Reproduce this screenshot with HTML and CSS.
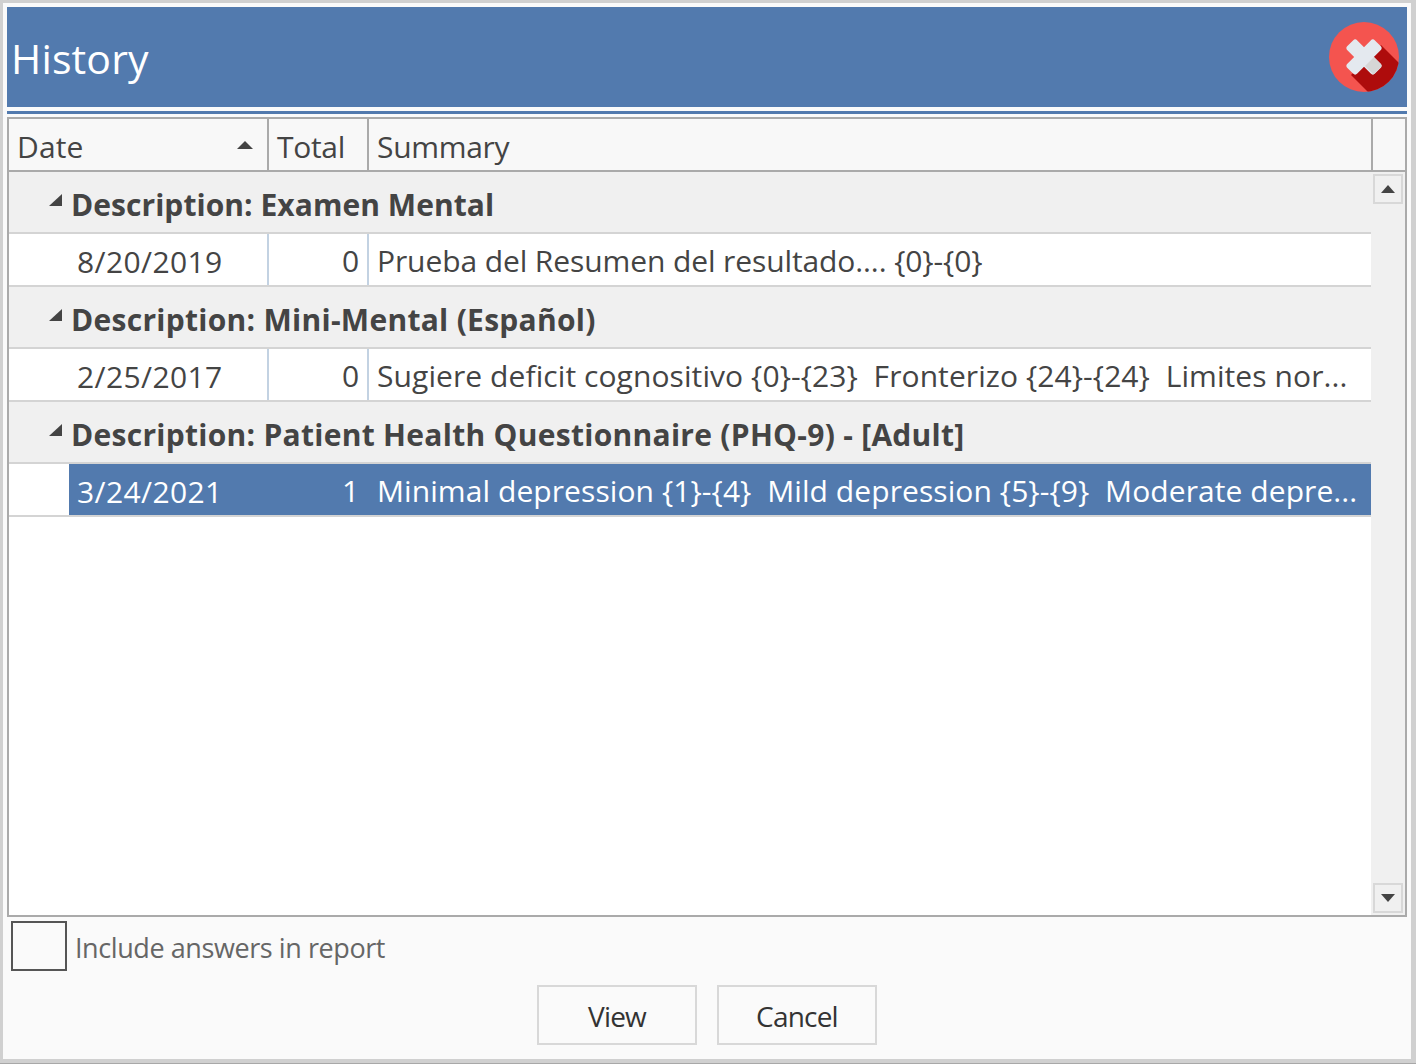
FILE: index.html
```html
<!DOCTYPE HTML>
<html lang="en">
  <head>
    <title>History</title>
    <meta charset="utf-8">
    <link rel="stylesheet" href="styles.css">
  </head>
  <body>
  <div class="dialog">
    <div class="titlebar">
      <span class="title">History</span>
      <svg class="close" width="70" height="70" viewBox="0 0 70 70">
        <defs><clipPath id="disc"><circle cx="35" cy="35" r="35"/></clipPath></defs>
        <circle cx="35" cy="35" r="35" fill="#f4544f"/>
        <polygon clip-path="url(#disc)" points="52,23 75,46 75,75 44,75 22,53" fill="#ae0c0c"/>
        <rect x="15.5" y="28" width="39" height="14" rx="3" fill="#e4e9ef" transform="rotate(45 35 35)"/>
        <rect x="15.5" y="28" width="39" height="14" rx="3" fill="#e4e9ef" transform="rotate(-45 35 35)"/>
        <path d="M36 44 L45 35 L52 42 Q53 44 52 45 L45 52 Q44 53 43 51 Z" fill="#d6d6d6"/>
      </svg>
    </div>
    <div class="rule"></div>

    <div class="grid">
      <div class="grid-main">
        <div class="head row-cols">
          <div class="hcell date-h"><span>Date</span><svg width="16" height="8" viewBox="0 0 16 8"><polygon points="8,0 16,8 0,8" fill="#444"/></svg></div>
          <div class="hcell total-h">Total</div>
          <div class="hcell summary-h">Summary</div>
          <div class="hcell corner"></div>
        </div>
        <div class="body-wrap">
          <div class="rows">
            <div class="group"><svg class="tri" width="13" height="12" viewBox="0 0 13 12"><polygon points="13,0 13,12 0,12" fill="#444"/></svg><span class="group-text group-short">Description: Examen Mental</span></div>
            <div class="data row-cols">
              <div class="cell date">8/20/2019</div>
              <div class="cell total">0</div>
              <div class="cell summary">Prueba del Resumen del resultado.... {0}-{0}</div>
            </div>
            <div class="group"><svg class="tri" width="13" height="12" viewBox="0 0 13 12"><polygon points="13,0 13,12 0,12" fill="#444"/></svg><span class="group-text">Description: Mini-Mental (Español)</span></div>
            <div class="data row-cols">
              <div class="cell date">2/25/2017</div>
              <div class="cell total">0</div>
              <div class="cell summary summary-long">Sugiere deficit cognositivo {0}-{23}&nbsp; Fronterizo {24}-{24}&nbsp; Limites nor...</div>
            </div>
            <div class="group"><svg class="tri" width="13" height="12" viewBox="0 0 13 12"><polygon points="13,0 13,12 0,12" fill="#444"/></svg><span class="group-text">Description: Patient Health Questionnaire (PHQ-9) - [Adult]</span></div>
            <div class="data row-cols selected">
              <div class="cell date">3/24/2021</div>
              <div class="cell total">1</div>
              <div class="cell summary summary-long">Minimal depression {1}-{4}&nbsp; Mild depression {5}-{9}&nbsp; Moderate depre...</div>
            </div>
          </div>
          <div class="scrollbar">
            <div class="sbtn"><svg width="14" height="8" viewBox="0 0 14 8"><polygon points="7,0 14,8 0,8" fill="#444"/></svg></div>
            <div class="sbtn"><svg width="14" height="8" viewBox="0 0 14 8"><polygon points="0,0 14,0 7,8" fill="#444"/></svg></div>
          </div>
        </div>
      </div>
    </div>

    <div class="include">
      <div class="check"></div>
      <span>Include answers in report</span>
    </div>
    <div class="buttons">
      <div class="btn">View</div>
      <div class="btn">Cancel</div>
    </div>
  </div>
  </body>
</html>
```
FILE: styles.css
```css
html, body {
  margin: 0;
  padding: 0;
  height: 100%;
}
body {
  font-family: "Open Sans", "Noto Sans", sans-serif;
  color: #444;
  background: #a8a8a8;
}
.dialog {
  box-sizing: border-box;
  width: 1416px;
  height: 1063px;
  background: #fafafa;
  border-style: solid;
  border-color: #d0d0d0;
  border-width: 3px 5px 4px 3px;
  padding: 4px 4px 0 4px;
  display: flex;
  flex-direction: column;
}
.titlebar {
  height: 100px;
  background: #527aae;
  display: flex;
  align-items: center;
  justify-content: space-between;
  padding: 0 8px 0 4px;
  flex: none;
}
.title {
  color: #fff;
  font-size: 41px;
  letter-spacing: 0.15px;
  margin-top: 2px;
}
.close {
  display: block;
}
.rule {
  height: 3px;
  margin-top: 4px;
  background: #527aae;
  flex: none;
}
.grid {
  box-sizing: border-box;
  margin-top: 3px;
  height: 800px;
  border: 2px solid #aaa;
  background: #fff;
  flex: none;
}
.grid-main {
  height: 100%;
  display: flex;
  flex-direction: column;
}
.row-cols {
  display: grid;
  grid-template-columns: 260px 100px 1002px;
}
.head {
  grid-template-columns: 260px 100px 1004px 32px;
  height: 53px;
  box-sizing: border-box;
  border-bottom: 2px solid #aaa;
  background: #f8f8f8;
  flex: none;
}
.hcell {
  box-sizing: border-box;
  border-right: 2px solid #aaa;
  font-size: 30px;
  line-height: 56px;
  padding-left: 8px;
  letter-spacing: -0.3px;
  overflow: hidden;
}
.corner {
  border-right: 0;
}
.date-h {
  display: flex;
  justify-content: space-between;
  align-items: center;
  padding-right: 14px;
  letter-spacing: 0.15px;
}
.date-h span {
  margin-top: 5px;
}
.body-wrap {
  flex: 1;
  display: flex;
  min-height: 0;
}
.rows {
  width: 1362px;
  flex: none;
}
.group {
  box-sizing: border-box;
  height: 62px;
  background: #f0f0f0;
  border-bottom: 2px solid #d4d4d4;
  display: flex;
  align-items: center;
  padding-left: 40px;
}
.tri {
  margin-right: 9px;
  margin-top: -4px;
}
.group-text {
  font-size: 30px;
  font-weight: 700;
  letter-spacing: 0.28px;
  color: #444;
  margin-top: 4px;
}
.group-short {
  letter-spacing: 0.05px;
}
.data {
  box-sizing: border-box;
  height: 53px;
  border-bottom: 2px solid #d4d4d4;
  background: #fff;
}
.cell {
  box-sizing: border-box;
  font-size: 30px;
  line-height: 54px;
  letter-spacing: -0.1px;
  white-space: nowrap;
  overflow: hidden;
  border-right: 2px solid #c3d2e2;
  height: 51px;
}
.date {
  padding-left: 68px;
  letter-spacing: 0.4px;
  line-height: 55px;
}
.total {
  text-align: right;
  padding-right: 8px;
}
.summary {
  padding-left: 8px;
  border-right: 0;
}
.summary-long {
  letter-spacing: 0.08px;
}
.selected {
  background: linear-gradient(to right, #fff 60px, #527aae 60px);
}
.selected .cell {
  color: #fff;
  border-right-color: #527aae;
}
.scrollbar {
  flex: 1;
  background: #f0f0f0;
  display: flex;
  flex-direction: column;
  justify-content: space-between;
  padding: 2px;
}
.sbtn {
  box-sizing: border-box;
  width: 30px;
  height: 30px;
  border: 2px solid #d8d8d8;
  display: flex;
  align-items: center;
  justify-content: center;
}
.include {
  display: flex;
  align-items: flex-start;
  margin-top: 4px;
  padding-left: 4px;
  font-size: 27px;
  letter-spacing: -0.42px;
  line-height: 44px;
  color: #666;
  flex: none;
}
.include span {
  margin-top: 5px;
}
.check {
  box-sizing: border-box;
  width: 56px;
  height: 50px;
  border: 2px solid #555;
  margin-right: 8px;
}
.buttons {
  display: flex;
  justify-content: center;
  gap: 20px;
  margin-top: 14px;
  flex: none;
}
.btn {
  box-sizing: border-box;
  width: 160px;
  height: 60px;
  border: 2px solid #d8d8d8;
  text-align: center;
  font-size: 28px;
  line-height: 58px;
  letter-spacing: -0.8px;
  color: #333;
}
```
